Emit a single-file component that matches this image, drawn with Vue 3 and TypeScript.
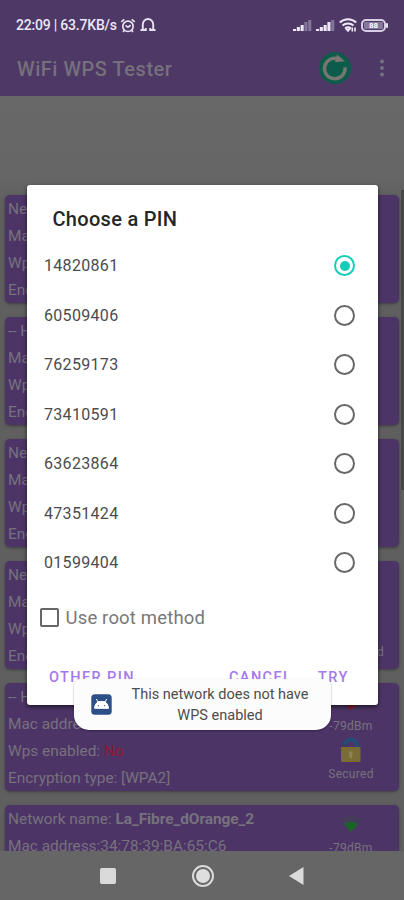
<script setup lang="ts">
import { ref } from 'vue'

interface Network {
  name: string
  bold?: boolean
  wide?: boolean
  mac: string
  wps: string
  encryption: string
  level: string
  color: string
}

const networks: Network[] = [
  { name: 'Network name:', mac: '', wps: 'No', encryption: '[WPA2]', level: '-79dBm', color: '#8d1c22' },
  { name: '-- Hidden --', mac: '', wps: 'No', encryption: '[WPA2]', level: '-79dBm', color: '#8d1c22' },
  { name: 'Network name:', mac: '', wps: 'No', encryption: '[WPA2]', level: '-79dBm', color: '#8d1c22' },
  { name: 'Network name:', wide: true, mac: '', wps: 'No', encryption: '[WPA2]', level: '-79dBm', color: '#8d1c22' },
  { name: '-- Hidden --', mac: '', wps: 'No', encryption: '[WPA2]', level: '-79dBm', color: '#8d1c22' },
  { name: 'Network name:', bold: true, mac: '34:78:39:BA:65:C6', wps: 'No', encryption: '[WPA2]', level: '-79dBm', color: '#1b6428' },
]

const pins: string[] = ['14820861', '60509406', '76259173', '73410591', '63623864', '47351424', '01599404']
const selected = ref<string>(pins[0])
const useRoot = ref<boolean>(false)
const bars: number[] = [2, 4, 6, 8, 10]
</script>

<template>
  <div class="screen">
    <header class="top">
      <div class="status">
        <span class="clock">22:09 | 63.7KB/s</span>
        <svg class="alarm" width="16" height="15" viewBox="0 0 15 15" fill="none" stroke="#e9e1f2" stroke-width="1.7">
          <circle cx="7.5" cy="8.3" r="5.2" />
          <path d="M.8 3.8 3.8 1.3M14.2 3.8 11.2 1.3M5 7.3l2.4 2 2.8-2M3.8 12.2l-1.2 1.7M11.2 12.2l1.2 1.7" />
        </svg>
        <svg class="bell" width="16" height="16" viewBox="0 0 16 16" fill="none" stroke="#e9e1f2" stroke-width="1.9">
          <path d="M.5 13h5.3v-2M15.5 13h-5.3v-2M2.8 13V7.3a5.2 5.3 0 0 1 10.4 0V13" />
        </svg>
        <span class="spacer"></span>
        <svg class="signal" width="19" height="13" viewBox="0 0 19 13">
          <rect v-for="(h, i) in bars" :key="i" :x="i * 3.8" :y="12 - h - (i > 2 ? 1 : 0)" width="3.1" :height="h + (i > 2 ? 1 : 0)" :fill="i > 2 ? '#84749a' : '#efe8f7'" />
        </svg>
        <svg class="signal" width="19" height="13" viewBox="0 0 19 13">
          <rect v-for="(h, i) in bars" :key="i" :x="i * 3.8" :y="12 - h - (i > 2 ? 1 : 0)" width="3.1" :height="h + (i > 2 ? 1 : 0)" :fill="i > 3 ? '#84749a' : '#efe8f7'" />
        </svg>
        <svg class="wifi" width="18" height="14" viewBox="0 0 18 14" fill="none" stroke="#efe8f7" stroke-width="2">
          <path d="M.8 4.5a12 12 0 0 1 16.4 0M3.5 7.6a8 8 0 0 1 11 0M6.2 10.4a4 4 0 0 1 5.6 0" />
          <path d="M7.2 11 9 13l1.8-2zM13.3 9.5v4M16 9.5v4" stroke-width="1.6" />
        </svg>
        <span class="battery"><span class="cell">88</span></span>
      </div>
      <div class="appbar">
        <h1>WiFi WPS Tester</h1>
        <svg class="refresh" width="32" height="32" viewBox="0 0 32 32">
          <circle cx="16" cy="16" r="16" fill="#0d5c4b" />
          <path d="M19.2 6.8A10.3 10.3 0 1 0 26 15.2" fill="none" stroke="#777772" stroke-width="3.4" />
          <path d="m18 2.5 8 6.8-10 1z" fill="#777772" />
        </svg>
        <svg class="more" width="6" height="18" viewBox="0 0 6 18" fill="#77717d">
          <circle cx="3" cy="2.5" r="1.9" /><circle cx="3" cy="9" r="1.9" /><circle cx="3" cy="15.5" r="1.9" />
        </svg>
      </div>
    </header>

    <main class="list">
      <article v-for="(n, i) in networks" :key="i" class="card">
        <div class="info">
          <p>{{ n.name }} <b v-if="n.bold">La_Fibre_dOrange_2</b></p>
          <p>Mac address:{{ n.mac }}</p>
          <p>Wps enabled: <span class="no">{{ n.wps }}</span></p>
          <p>Encryption type: {{ n.encryption }}</p>
        </div>
        <div class="side">
          <svg width="24" height="20" viewBox="0 0 24 20">
            <path d="M2 4Q12-2 22 4L19 8H5Z" :fill="n.color" opacity=".18" />
            <path d="M4.5 8.5Q12 5.5 19.5 8.5L12 17.5Z" :fill="n.color" />
          </svg>
          <span class="level">{{ n.level }}</span>
          <svg class="lock" width="22" height="27" viewBox="0 0 22 27">
            <path d="M4.5 8C6 .5 17 0 17 10" fill="none" stroke="#214f78" stroke-width="3.6" />
            <rect x="1" y="10" width="19.5" height="15" rx="1" fill="#796d35" />
            <path d="M9 14.5h3.5v3l-.8 4H9.8l-.8-4z" fill="#8b8257" />
          </svg>
          <span class="secured" :class="{ wide: n.wide }">Secured</span>
        </div>
      </article>
      <span class="scrollbar"></span>
    </main>

    <nav class="nav">
      <span class="recent"></span>
      <span class="home"><span></span></span>
      <svg class="back" width="15" height="18" viewBox="0 0 15 18"><path d="M14.5 0v18L0 9z" fill="#dadada" /></svg>
    </nav>

    <section class="dialog">
      <h2>Choose a PIN</h2>
      <ul>
        <li v-for="pin in pins" :key="pin" @click="selected = pin">
          <span>{{ pin }}</span>
          <i class="radio" :class="{ on: pin === selected }"></i>
        </li>
      </ul>
      <div class="root" @click="useRoot = !useRoot"><i class="box"></i><span>Use root method</span></div>
      <footer>
        <span class="other">OTHER PIN</span>
        <span class="cancel">CANCEL</span>
        <span>TRY</span>
      </footer>
    </section>

    <aside class="toast">
      <svg width="21" height="21" viewBox="0 0 21 21">
        <rect x=".3" y=".3" width="20.4" height="20.4" rx="3.5" fill="#2d4f88" />
        <path d="M3.5 14.3c.3-3.4 1.8-5.5 4-6.7h6c2.2 1.2 3.7 3.3 4 6.7zM7 8 5.3 5M14 8l1.7-3" fill="#fff" stroke="#fff" />
        <circle cx="7.4" cy="11.7" r=".6" fill="#2d4f88" /><circle cx="13.6" cy="11.7" r=".6" fill="#2d4f88" />
      </svg>
      <p>This network does not have<br>WPS enabled</p>
    </aside>
  </div>
</template>

<style>
body { margin: 0; }
</style>

<style scoped>
* { box-sizing: border-box; }
p, h1, h2, ul { margin: 0; padding: 0; }
.screen {
  position: relative;
  display: flex;
  flex-direction: column;
  width: 404px;
  height: 900px;
  overflow: hidden;
  background: #666;
  font-family: Roboto, "Liberation Sans", sans-serif;
}
.top { height: 96px; background: #4e3866; box-shadow: 0 1px 3px rgba(0, 0, 0, .35); }
.status { display: flex; align-items: center; height: 50px; padding: 0 18px 0 16px; color: #ede6f5; }
.clock { width: 102px; font-size: 14px; font-weight: 500; white-space: nowrap; letter-spacing: -.2px; }
.alarm { margin-left: 2px; }
.bell { margin-left: 4px; }
.spacer { flex: 1; }
.signal { margin-right: 4px; }
.wifi { margin-right: 4px; }
.battery { position: relative; width: 25px; height: 13px; padding: 1px; border: 2px solid #d9cfe4; border-radius: 5px; }
.battery::after { content: ""; position: absolute; right: -4px; top: 2px; width: 2px; height: 5px; background: #e8e0f0; border-radius: 1px; }
.cell { display: block; height: 7px; background: #85789a; color: #fff; font-size: 8px; font-weight: 700; line-height: 7px; text-align: center; border-radius: 1px; }
.appbar { display: flex; align-items: center; height: 36px; padding: 0 19px 0 17px; }
h1 { flex: 1; color: #75707b; font-size: 20px; font-weight: 500; letter-spacing: .53px; line-height: 38px; padding-top: 2px; }
.refresh { margin-right: 28px; }
.list { position: relative; display: flex; flex-direction: column; gap: 14px; height: 755px; padding: 99px 5px 0; overflow: hidden; background: linear-gradient(#686868, #666 80px, #5f5f5f 110px, #5f5f5f); }
.card { display: flex; justify-content: space-between; flex: none; height: 108px; padding: 0 15px 0 3px; border-radius: 5px; background: #4c3566; box-shadow: 0 1px 3px rgba(0, 0, 0, .35); color: #77717d; }
.info { padding-top: .5px; font-size: 15.4px; line-height: 27px; white-space: nowrap; }
.info b { font-weight: 700; letter-spacing: -.05px; }
.no { color: #901731; }
.side { display: flex; flex-direction: column; align-items: center; width: 66px; padding-top: 10px; font-size: 12px; line-height: 14px; }
.level { margin-top: 6px; letter-spacing: .3px; }
.lock { margin-top: 4px; }
.secured { margin-top: 3px; letter-spacing: .3px; }
.secured.wide { align-self: flex-end; }
.scrollbar { position: absolute; top: 94px; right: 0; width: 3px; height: 300px; background: #484848; }
.nav { display: flex; align-items: center; height: 49px; padding-left: 100px; background: #666; }
.recent { width: 16px; height: 16px; border-radius: 2px; background: #dadada; }
.home { display: flex; align-items: center; justify-content: center; width: 22px; height: 22px; margin-left: 75.5px; border: 2px solid #dadada; border-radius: 50%; }
.home span { width: 14px; height: 14px; border-radius: 50%; background: #dedede; }
.back { margin-left: 75px; }
.dialog { position: absolute; top: 185px; left: 27px; width: 351px; height: 520px; padding-top: 19px; background: #fff; border-radius: 3px; box-shadow: 0 2px 4px rgba(0, 0, 0, .6); }
h2 { height: 37px; padding-left: 25.5px; color: #262626; font-size: 20px; font-weight: 500; line-height: 31px; letter-spacing: .3px; }
ul { list-style: none; }
li { display: flex; align-items: center; justify-content: space-between; height: 49.5px; padding: 0 23px 0 17px; color: #4c4c4c; font-size: 16px; letter-spacing: .32px; }
.radio { width: 21px; height: 21px; border: 2px solid #686868; border-radius: 50%; }
.radio.on { padding: 3.5px; border-color: #16cdb7; background: #16cdb7 content-box; }
.root { display: flex; align-items: center; gap: 7px; height: 28px; margin-top: 16px; padding-left: 12.5px; color: #787878; font-size: 18.5px; letter-spacing: .17px; }
.box { width: 19px; height: 19px; border: 2px solid #666; border-radius: 2px; }
footer { display: flex; align-items: center; height: 28px; margin-top: 32px; padding-left: 22px; color: #a478ee; font-size: 14.5px; font-weight: 500; letter-spacing: 1.4px; line-height: 28px; }
.other { width: 180px; }
.cancel { width: 89px; }
.toast { position: absolute; top: 679px; left: 74px; display: flex; align-items: center; width: 257px; height: 51px; padding-left: 17px; border-radius: 6px 6px 15px 15px; background: #fcfcfc; box-shadow: 0 1px 2px rgba(30, 0, 50, .4); color: #4c4c4c; }
.toast p { width: 182px; margin-left: 17px; padding-top: 1px; font-size: 14.5px; line-height: 21px; text-align: center; white-space: nowrap; }
</style>
